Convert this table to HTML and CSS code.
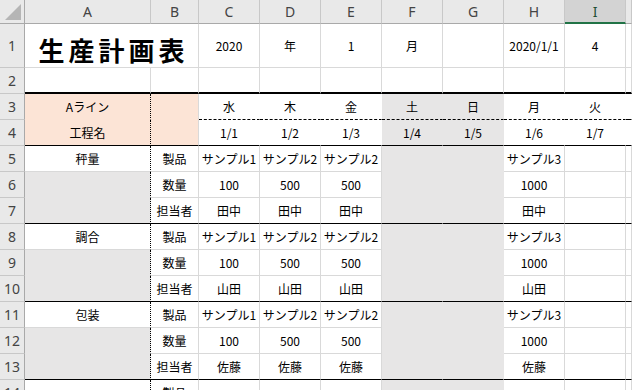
FILE: index.html
```html
<!DOCTYPE html>
<html lang="ja">
<head>
    <meta charset="UTF-8">
    <meta name="viewport" content="width=device-width, initial-scale=1.0">
    <title>生産計画表</title>
    <link rel="stylesheet" href="styles.css">
</head>
<body>
    <div class="sheet">
        <!-- column headings -->
        <div class="corner"><svg width="16" height="16" viewBox="0 0 16 16"><polygon points="16,0 16,16 0,16" fill="#b5b5b5"/></svg></div>
        <div class="hd">A</div>
        <div class="hd">B</div>
        <div class="hd">C</div>
        <div class="hd">D</div>
        <div class="hd">E</div>
        <div class="hd">F</div>
        <div class="hd">G</div>
        <div class="hd">H</div>
        <div class="hd sel">I</div>
        <div class="hd"></div>

        <!-- 1 -->
        <div class="rh">1</div>
        <div class="cell title">生産計画表</div>
        <div class="cell">2020</div>
        <div class="cell">年</div>
        <div class="cell">1</div>
        <div class="cell">月</div>
        <div class="cell"></div>
        <div class="cell">2020/1/1</div>
        <div class="cell">4</div>
        <div class="cell"></div>

        <!-- 2 -->
        <div class="rh">2</div>
        <div class="cell thick"></div>
        <div class="cell thick"></div>
        <div class="cell thick"></div>
        <div class="cell thick"></div>
        <div class="cell thick"></div>
        <div class="cell thick"></div>
        <div class="cell thick"></div>
        <div class="cell thick"></div>
        <div class="cell thick"></div>
        <div class="cell thick"></div>

        <!-- 3 : line / weekday -->
        <div class="rh">3</div>
        <div class="cell peach dots">Aライン</div>
        <div class="cell peach edge"></div>
        <div class="cell blank dash">水</div>
        <div class="cell blank dash">木</div>
        <div class="cell blank dash">金</div>
        <div class="cell shade dash">土</div>
        <div class="cell shade dash">日</div>
        <div class="cell blank dash">月</div>
        <div class="cell blank dash">火</div>
        <div class="cell blank dash"></div>

        <!-- 4 : process / date -->
        <div class="rh">4</div>
        <div class="cell peach dots sep">工程名</div>
        <div class="cell peach edge sep"></div>
        <div class="cell blank sep">1/1</div>
        <div class="cell blank sep">1/2</div>
        <div class="cell blank sep">1/3</div>
        <div class="cell shade sep">1/4</div>
        <div class="cell shade sep">1/5</div>
        <div class="cell blank sep">1/6</div>
        <div class="cell blank sep">1/7</div>
        <div class="cell blank sep"></div>

        <!-- 5-7 : 秤量 -->
        <div class="rh">5</div>
        <div class="cell dots">秤量</div>
        <div class="cell">製品</div>
        <div class="cell">サンプル1</div>
        <div class="cell">サンプル2</div>
        <div class="cell">サンプル2</div>
        <div class="cell shade"></div>
        <div class="cell shade"></div>
        <div class="cell">サンプル3</div>
        <div class="cell"></div>
        <div class="cell"></div>

        <div class="rh">6</div>
        <div class="cell shade dots"></div>
        <div class="cell">数量</div>
        <div class="cell">100</div>
        <div class="cell">500</div>
        <div class="cell">500</div>
        <div class="cell shade"></div>
        <div class="cell shade"></div>
        <div class="cell">1000</div>
        <div class="cell"></div>
        <div class="cell"></div>

        <div class="rh">7</div>
        <div class="cell shade dots sep"></div>
        <div class="cell sep">担当者</div>
        <div class="cell sep">田中</div>
        <div class="cell sep">田中</div>
        <div class="cell sep">田中</div>
        <div class="cell shade sep"></div>
        <div class="cell shade sep"></div>
        <div class="cell sep">田中</div>
        <div class="cell sep"></div>
        <div class="cell sep"></div>

        <!-- 8-10 : 調合 -->
        <div class="rh">8</div>
        <div class="cell dots">調合</div>
        <div class="cell">製品</div>
        <div class="cell">サンプル1</div>
        <div class="cell">サンプル2</div>
        <div class="cell">サンプル2</div>
        <div class="cell shade"></div>
        <div class="cell shade"></div>
        <div class="cell">サンプル3</div>
        <div class="cell"></div>
        <div class="cell"></div>

        <div class="rh">9</div>
        <div class="cell shade dots"></div>
        <div class="cell">数量</div>
        <div class="cell">100</div>
        <div class="cell">500</div>
        <div class="cell">500</div>
        <div class="cell shade"></div>
        <div class="cell shade"></div>
        <div class="cell">1000</div>
        <div class="cell"></div>
        <div class="cell"></div>

        <div class="rh">10</div>
        <div class="cell shade dots sep"></div>
        <div class="cell sep">担当者</div>
        <div class="cell sep">山田</div>
        <div class="cell sep">山田</div>
        <div class="cell sep">山田</div>
        <div class="cell shade sep"></div>
        <div class="cell shade sep"></div>
        <div class="cell sep">山田</div>
        <div class="cell sep"></div>
        <div class="cell sep"></div>

        <!-- 11-13 : 包装 -->
        <div class="rh">11</div>
        <div class="cell dots">包装</div>
        <div class="cell">製品</div>
        <div class="cell">サンプル1</div>
        <div class="cell">サンプル2</div>
        <div class="cell">サンプル2</div>
        <div class="cell shade"></div>
        <div class="cell shade"></div>
        <div class="cell">サンプル3</div>
        <div class="cell"></div>
        <div class="cell"></div>

        <div class="rh">12</div>
        <div class="cell shade dots"></div>
        <div class="cell">数量</div>
        <div class="cell">100</div>
        <div class="cell">500</div>
        <div class="cell">500</div>
        <div class="cell shade"></div>
        <div class="cell shade"></div>
        <div class="cell">1000</div>
        <div class="cell"></div>
        <div class="cell"></div>

        <div class="rh">13</div>
        <div class="cell shade dots sep"></div>
        <div class="cell sep">担当者</div>
        <div class="cell sep">佐藤</div>
        <div class="cell sep">佐藤</div>
        <div class="cell sep">佐藤</div>
        <div class="cell shade sep"></div>
        <div class="cell shade sep"></div>
        <div class="cell sep">佐藤</div>
        <div class="cell sep"></div>
        <div class="cell sep"></div>

        <!-- 14 -->
        <div class="rh">14</div>
        <div class="cell dots"></div>
        <div class="cell">製品</div>
        <div class="cell"></div>
        <div class="cell"></div>
        <div class="cell"></div>
        <div class="cell shade"></div>
        <div class="cell shade"></div>
        <div class="cell"></div>
        <div class="cell"></div>
        <div class="cell"></div>
    </div>
</body>
</html>
```

FILE: styles.css
```css
body {
    margin: 0;
    background: #fff;
    overflow: hidden;
}
.sheet {
    width: 632px;
    height: 390px;
    overflow: hidden;
    display: grid;
    grid-template-columns: 25px 126px 48px repeat(7, 61px) 1fr;
    grid-template-rows: 24px 44px 26px repeat(12, 26px);
    font-family: "Liberation Sans Narrow", "Noto Sans CJK JP", sans-serif;
    font-size: 12px;
    color: #000;
}
.sheet > div {
    box-sizing: border-box;
    display: flex;
    align-items: center;
    justify-content: center;
    white-space: nowrap;
    overflow: hidden;
}

/* headings */
.corner {
    background: #e9e9e9;
    border-right: 1px solid #a9a9a9;
    border-bottom: 1px solid #a9a9a9;
    align-items: flex-end !important;
    justify-content: flex-end !important;
    padding: 0 3px 3px 0;
}
.hd, .rh {
    background: #e9e9e9;
    color: #444;
    font-family: "Noto Sans", sans-serif;
    font-size: 14px;
}
.hd {
    border-right: 1px solid #c8c8c8;
    border-bottom: 1px solid #a9a9a9;
}
.hd.sel {
    background: #d3d3d3;
    color: #1f4e33;
    border-bottom: 2px solid #217346;
}
.rh {
    border-right: 1px solid #a9a9a9;
    border-bottom: 1px solid #c8c8c8;
}

/* cells */
.cell {
    border-right: 1px solid #d9d9d9;
    border-bottom: 1px solid #d9d9d9;
}
.title {
    grid-column: span 2;
    font-family: "Noto Sans CJK JP", sans-serif;
    font-size: 26px;
    font-weight: bold;
    letter-spacing: 4px;
    padding: 8px 0 0 4px;
}
.peach { background: #fce4d6; border-color: #fce4d6; }
.shade { background: #e7e6e6; border-color: #e7e6e6; }
.blank { background: #fff; border-color: #fff; }

.edge { border-right: 1px solid #d9d9d9; }
.dots { border-right: 1px dotted #000; }
.dash { border-bottom: 1px dashed #000; }
.sep { border-bottom: 1px solid #000; }
.thick { border-bottom: 2px solid #000; }
```
